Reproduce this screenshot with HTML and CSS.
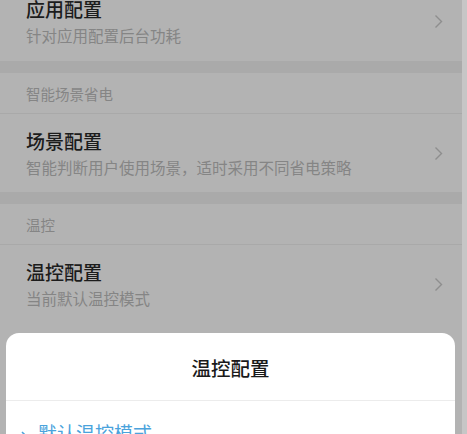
FILE: index.html
```html
<!DOCTYPE html>
<html>
	<head>
		<meta charset="UTF-8">
		<title>温控配置</title>
		<link rel="stylesheet" href="styles.css">
	</head>
	<body>
		<div class="screen">
			<div class="list">
				<div class="row first">
					<div class="row-text">
						<div class="row-title">应用配置</div>
						<div class="row-desc">针对应用配置后台功耗</div>
					</div>
					<svg class="arrow" width="9" height="15" viewBox="0 0 9 15"><path d="M1.5 1.5 L7.5 7.5 L1.5 13.5" fill="none" stroke="#8e8e8e" stroke-width="1.4"/></svg>
				</div>
				<div class="band"></div>
				<div class="group-title">智能场景省电</div>
				<div class="row">
					<div class="row-text">
						<div class="row-title">场景配置</div>
						<div class="row-desc">智能判断用户使用场景，适时采用不同省电策略</div>
					</div>
					<svg class="arrow" width="9" height="15" viewBox="0 0 9 15"><path d="M1.5 1.5 L7.5 7.5 L1.5 13.5" fill="none" stroke="#8e8e8e" stroke-width="1.4"/></svg>
				</div>
				<div class="band"></div>
				<div class="group-title">温控</div>
				<div class="row">
					<div class="row-text">
						<div class="row-title">温控配置</div>
						<div class="row-desc">当前默认温控模式</div>
					</div>
					<svg class="arrow" width="9" height="15" viewBox="0 0 9 15"><path d="M1.5 1.5 L7.5 7.5 L1.5 13.5" fill="none" stroke="#8e8e8e" stroke-width="1.4"/></svg>
				</div>
				<div class="spacer"></div>
				<!-- 弹出的底部菜单 -->
				<div class="sheet">
					<div class="sheet-title">温控配置</div>
					<div class="sheet-item">
						<svg class="pick" width="10" height="14" viewBox="0 0 10 14"><path d="M2 3 L7 8" fill="none" stroke="#4aa3dc" stroke-width="1.6"/></svg>
						<span>默认温控模式</span>
					</div>
				</div>
			</div>
			<div class="edge"></div>
		</div>
	</body>
</html>
```

FILE: styles.css
```css
*{
	margin: 0;
	padding: 0;
	box-sizing: border-box;
}
html,body{
	width: 467px;
	height: 434px;
	overflow: hidden;
	background-color: #b3b3b3;
}
body{
	font-family: "Noto Sans CJK SC", "Noto Sans", sans-serif;
}
.screen{
	display: flex;
	align-items: flex-start;
	width: 467px;
	height: 434px;
	overflow: hidden;
}
.list{
	width: 462px;
	margin-top: -18px;
	display: flex;
	flex-direction: column;
	flex-shrink: 0;
}
.list > div{
	flex-shrink: 0;
}
.edge{
	flex: 1;
	align-self: stretch;
	background-color: #c6c6c6;
}
.row{
	height: 79px;
	display: flex;
	align-items: center;
	padding-left: 26px;
	padding-right: 19px;
	border-top: 1px solid #a9a9a9;
}
.row.first{
	border-top: none;
}
.row-text{
	flex: 1;
}
.row-title{
	font-size: 19px;
	line-height: 24px;
	font-weight: 500;
	color: #1c1c1c;
}
.row-desc{
	font-size: 15.5px;
	line-height: 22px;
	color: #858585;
	margin-top: 3px;
}
.arrow{
	display: block;
}
.band{
	height: 12px;
	background-color: #aaaaaa;
}
.group-title{
	height: 40px;
	line-height: 42px;
	margin-left: 26px;
	font-size: 14.5px;
	color: #858585;
}
.spacer{
	height: 10px;
}
.sheet{
	margin-left: 6px;
	width: 449px;
	height: 140px;
	background-color: #fff;
	border-radius: 13px 13px 0 0;
}
.sheet-title{
	height: 68px;
	line-height: 70px;
	text-align: center;
	font-size: 19.5px;
	font-weight: 500;
	color: #1a1a1a;
	border-bottom: 1px solid #ececec;
}
.sheet-item{
	display: flex;
	align-items: center;
	padding-left: 14px;
	padding-top: 18px;
	font-size: 19px;
	color: #4aa3dc;
}
.pick{
	margin-right: 8px;
	margin-top: 6px;
}
```
